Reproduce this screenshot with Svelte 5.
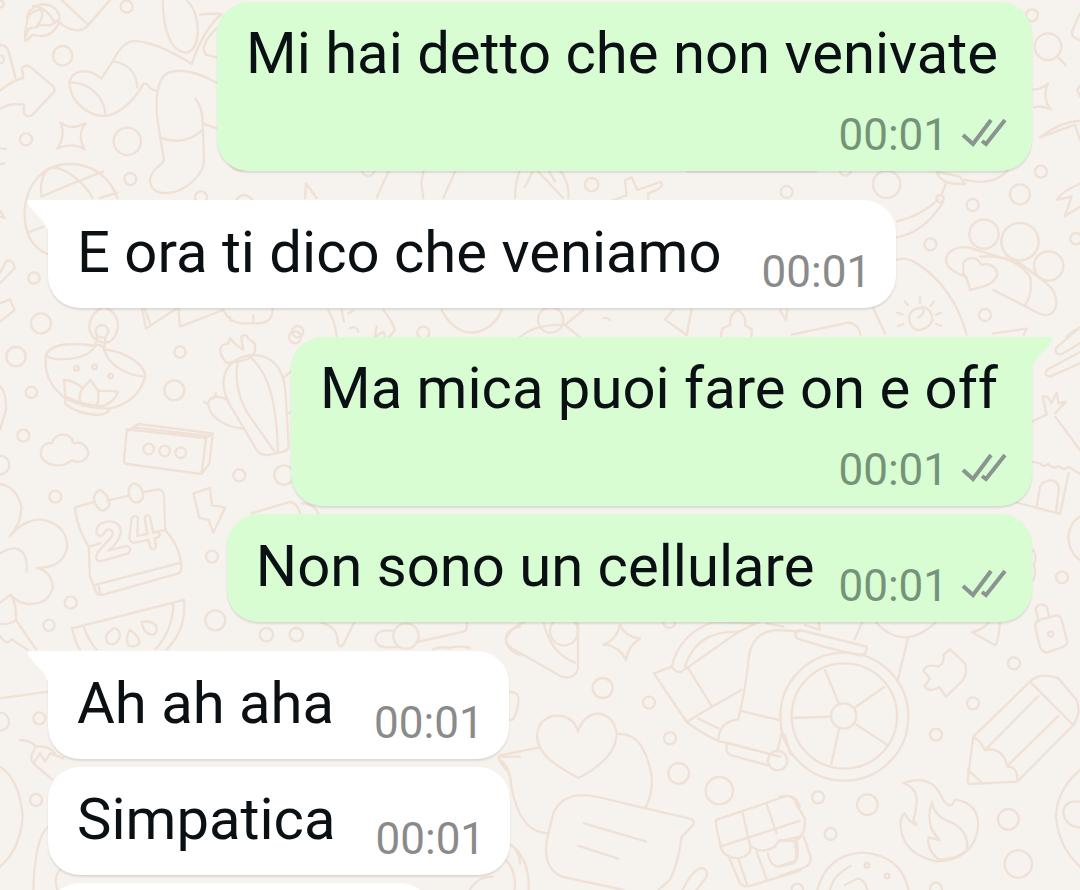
<script>
	const messages = [
		{ text: 'Mi hai detto che non venivate', time: '00:01', mine: true, stacked: true },
		{ text: 'E ora ti dico che veniamo', time: '00:01', first: true },
		{ text: 'Ma mica puoi fare on e off', time: '00:01', mine: true, first: true, stacked: true },
		{ text: 'Non sono un cellulare', time: '00:01', mine: true },
		{ text: 'Ah ah aha', time: '00:01', first: true },
		{ text: 'Simpatica', time: '00:01' },
	]

	// wallpaper drawings, on a grid three times finer than the page
	const doodles = [
		{
			x: 0,
			y: 0,
			dots: [
				[380, 20, 18], [188, 167, 29], [78, 418, 18], [382, 424, 41], [391, 537, 18],
				[102, 834, 17], [123, 970, 30], [603, 592, 18], [893, 995, 17], [0, 178, 12],
				[0, 12, 11],
			],
			paths: [
				'M185 0L265 75L330 0M170 62C210 96 245 100 265 75',
				'M82 45C100 4 160 0 178 45C182 85 145 118 105 105C82 105 90 125 76 122C70 85 84 86 82 45M82 52C125 5 145 40 108 82C75 85 85 90 78 108M108 82C132 62 145 92 168 62M100 18C125 18 150 40 165 70',
				'M0 135Q20 135 26 155L46 232M0 272Q38 240 70 234L66 204Q78 190 95 204L160 260Q168 268 160 278L98 344Q80 354 72 340L72 314Q30 308 0 326',
				'M488 0C490 90 510 150 555 158C600 160 610 50 560 0M575 192C600 120 630 70 665 42M665 42Q630 40 600 44M650 84C615 120 600 150 620 165L650 172',
				'M575 192C510 150 440 120 395 124C365 130 345 170 338 184L304 236C270 205 220 205 208 246C210 310 270 350 316 348C365 340 405 295 432 250C445 250 450 272 468 272M338 184C385 190 410 220 412 262M208 248C265 245 315 290 316 346',
				'M650 248C590 215 540 205 505 218C462 240 468 330 474 370L492 480C490 495 450 505 450 545C455 580 490 584 525 576C570 560 612 520 612 480L608 370C608 335 598 310 586 296M480 412Q550 440 606 392M608 370Q630 380 655 386',
				'M182 368Q215 392 256 370Q230 405 254 448Q215 425 172 446Q198 408 182 368Z',
				'M142 762C90 740 72 690 74 630C80 550 130 494 205 492C275 490 330 530 352 594M125 590C118 550 130 515 150 505C190 495 250 545 278 594M125 590C190 560 270 530 310 515M352 578L300 594M88 696L130 680',
				'M0 820L20 782Q40 778 44 805L0 850M0 910L30 898L44 930L0 965M0 445L18 447M0 492L12 490M0 650L14 654L0 632',
				'M312 920Q355 940 354 980Q345 1030 312 1028Q270 1020 268 980Q270 940 312 920',
				'M425 920L438 986L535 922L540 980L670 930M432 920L450 970M670 930Q690 970 730 970L780 970Q820 965 818 922M690 950v12M760 946v14M684 485Q705 520 735 510',
				'M705 605Q730 565 762 605',
			],
		},
		{
			x: 0,
			y: 300,
			dots: [
				[48, 170, 29], [94, 277, 17], [70, 407, 18], [0, 495, 28], [540, 156, 17],
				[523, 271, 30], [718, 526, 18], [852, 525, 29], [166, 590, 18],
				[636, 770, 18], [212, 908, 18], [147, 976, 17], [646, 961, 30], [799, 1004, 20],
				[889, 1004, 20], [446, 447, 16], [494, 453, 16], [542, 458, 16], [229, 205, 7],
				[284, 201, 7], [332, 228, 7], [306, 94, 19],
			],
			paths: [
				'M138 165C155 125 235 130 286 138Q300 128 312 148C380 155 435 195 436 230C420 285 380 315 328 326Q325 345 290 345Q230 340 196 312V295C150 260 130 220 138 165ZM138 165C150 185 260 185 286 138M312 148C325 190 370 225 434 230M196 295Q250 325 328 326',
				'M196 290L192 240Q220 240 248 264L272 240L294 272L354 274Q345 305 310 318Q260 320 196 290M248 264Q228 300 252 318M294 272Q300 310 284 320M290 110L286 138M316 114L312 148',
				'M125 475C115 440 140 425 156 430C165 395 215 395 220 430C250 420 272 450 262 470C250 488 230 488 216 480C195 500 150 505 125 475Z',
				'M380 395L415 372L638 400L628 490L605 522L380 492Q370 490 372 480ZM380 388L618 414L605 522M618 414L638 400M400 382L626 408',
				'M664 165C655 140 668 130 684 132L690 115L708 134L730 150L724 110Q740 98 744 115L764 130Q772 160 748 175Q700 190 680 188Q670 180 664 165',
				'M700 185C660 220 665 270 690 315L770 450Q785 470 810 464L850 455Q868 450 866 430L856 270C850 200 810 160 750 166Q720 170 700 185M715 178C700 240 720 310 750 350L826 458M745 166C800 210 830 290 834 458M728 386C670 380 620 345 626 305Q640 280 680 298M640 296L648 280M622 312L612 306M850 235L872 215M866 340L875 336',
				'M225 630Q222 618 240 618L284 606M322 602L386 588M430 576L475 568Q492 570 492 590L496 690C530 730 545 770 544 805Q545 818 530 822L310 884Q290 888 286 870L270 830L266 740C240 700 230 660 225 630M266 740L300 730M470 696L496 690M280 856L544 788M296 860L300 878',
				'M302 570Q330 590 328 615Q320 635 300 630Q280 610 282 590Q288 572 302 570M404 550Q430 560 430 590Q420 612 400 606Q384 590 386 570Q390 552 404 550',
				'M290 700Q285 670 325 664Q365 665 362 700Q355 730 325 752L380 738Q398 745 385 760L300 784Q280 780 295 755L335 710Q345 690 325 688Q315 690 310 704Q298 714 290 700M395 655L388 715Q390 728 405 728L445 720L452 745Q466 750 468 740L464 716L478 710Q484 698 470 696L460 698L450 650Q440 640 434 655L442 702L412 708L414 655Q408 640 395 655',
				'M580 580L630 564L636 616L676 622L640 698L626 660L598 654Z',
				'M0 552Q50 560 64 620Q65 670 30 708Q70 660 120 658Q200 670 202 740Q190 805 110 804Q155 815 158 860Q150 915 80 912Q50 905 32 884L0 908M0 760Q70 720 80 790V815M32 884Q50 910 48 960L108 1048M48 960Q30 975 0 972M0 1008Q20 1040 34 1018L84 1050M0 258Q20 280 18 330L0 388',
				'M216 985L552 900Q560 990 500 1048M216 985Q230 1040 240 1048M250 978Q270 1030 290 1048M520 908Q520 990 466 1048M342 984Q365 990 358 1015Q345 1040 325 1030Q312 1015 322 1000ZM390 990Q420 1010 418 1030Q405 1045 385 1036Q375 1010 390 990M425 966Q460 960 470 982Q472 1004 455 1005Q430 1000 425 966',
				'M755 640L870 606Q890 606 900 640M905 610Q940 610 955 640',
			],
		},
		{
			x: 780,
			y: 0,
			dots: [
				[756, 46, 18], [804, 140, 40], [783, 515, 18], [720, 583, 30], [578, 615, 18],
				[320, 553, 41], [480, 596, 11], [20, 576, 18], [451, 733, 18], [612, 702, 44],
				[720, 725, 56], [806, 798, 44], [888, 716, 17], [615, 945, 18], [196, 510, 17],
			],
			paths: [
				'M900 40L876 95Q872 112 900 120M832 170L858 196M760 268Q780 270 804 250Q785 290 812 328Q785 315 762 322M780 412Q840 365 900 362M780 412L885 374L900 420M900 255L892 270L900 290',
				'M900 552Q850 570 830 600L875 590L855 648L900 620M470 515Q480 555 555 552L540 530L470 515M555 540Q640 560 684 510M497 552L484 586M474 600Q420 650 350 664M490 606Q430 700 350 712M-280 514H108',
				'M500 790C490 750 540 735 575 745L720 790L800 850Q835 880 828 920Q815 955 780 942L640 870M500 790Q505 810 560 832M600 770Q700 760 750 830Q760 880 735 916M550 790Q560 770 590 776L606 795Q640 785 652 820Q650 845 610 860L570 870Q565 840 550 820Z',
				'M346 780Q380 770 410 790Q520 860 560 1004M280 925L315 1000M35 1004L205 968Q235 970 242 1004M640 1000L740 986L732 1004M860 1010Q880 990 900 985',
				'M414 952Q435 945 430 925Q400 920 388 945Q385 980 410 990Q445 990 458 960Q455 925 425 920M420 890V908M374 904L384 915M352 938L368 944M354 978L370 972M462 904L452 918M484 938L468 944M484 978L468 972',
			],
		},
		{
			x: 940,
			y: 320,
			dots: [[366, 772, 18]],
			paths: [
				'M420 22L350 82Q340 100 362 104L420 70M420 96L320 150Q310 165 330 170L420 130',
				'M275 305L320 284L308 230Q325 225 334 250L350 218L356 250L378 245L346 280M346 290L420 390M275 425L300 430Q310 445 325 432Q340 450 355 438Q375 455 385 440L420 462M386 460L360 582L220 545M290 560L300 500Q310 478 340 482Q362 490 355 520L348 575M420 590Q385 610 385 660Q390 700 420 720M280 690Q292 710 282 735Q290 760 280 780',
			],
		},
		{
			x: 500,
			y: 600,
			dots: [
				[308, 264, 30], [447, 308, 18], [510, 415, 18], [536, 520, 31], [658, 572, 41],
				[508, 66, 18], [192, 94, 42], [833, 482, 29],
			],
			paths: [
				'M80 64Q30 80 18 120Q16 130 34 144L185 230Q225 240 234 205V64M130 64Q150 160 225 188M360 75Q375 110 420 116Q385 135 378 180Q355 135 310 134Q350 120 360 75',
				'M234 395C220 330 120 330 112 400C105 450 150 490 236 534C320 490 350 445 350 400C340 325 255 320 234 395ZM350 402Q400 400 425 440Q480 540 436 624M0 466L118 442M0 480Q30 500 34 560Q60 700 145 700',
				'M430 624L290 590Q190 570 160 640L145 700Q120 800 185 830L370 870M430 624L570 656Q590 664 575 680L545 710Q535 790 510 840L475 870M252 670L438 724M236 738L354 776M548 870Q570 820 600 804Q625 805 620 830L590 870M34 735Q90 780 86 870M15 778Q50 810 44 870',
				'M462 220L515 200Q540 100 640 66L760 70M462 220L560 366Q620 410 660 424L840 470M515 200Q530 220 545 215L715 96L780 64M555 200Q590 90 715 96M565 205L636 320L560 366M636 320L724 270M595 356L655 385M715 358Q740 250 745 180Q755 95 830 90L900 94M715 358Q655 365 655 424M720 332L835 360M684 428Q670 460 700 468L805 496M690 430L810 462M845 400L833 450M855 405L870 462M800 70L850 80',
				'M648 660L860 588Q885 585 900 620M648 660Q645 670 665 750Q680 775 715 775Q760 765 750 735Q780 765 825 740L835 725L900 710M728 638L750 735M800 612L830 700M660 740L828 686L900 662M688 775L720 850Q730 862 750 858L900 812M715 775L742 856M770 755L800 838M804 760Q810 800 840 800L880 790Q895 780 885 730',
				'M30 276Q60 275 55 310Q45 365 30 360',
			],
		},
		{
			x: 780,
			y: 600,
			dots: [
				[193, 350, 192], [193, 348, 158], [191, 348, 38], [702, 190, 18], [579, 310, 18],
				[468, 404, 18], [114, 592, 18], [262, 614, 31], [152, 702, 18], [685, 658, 31],
				[715, 792, 41], [812, 102, 8], [261, 796, 7], [321, 828, 7], [468, 866, 18],
				[52, 868, 17],
			],
			paths: [
				'M135 210L177 312M226 322L312 262M228 373L320 434M178 384L154 492M38 354L153 350M60 90Q40 95 50 115Q140 145 240 166Q262 165 260 140L60 90M248 64L224 118M285 64Q370 160 470 64M385 110L352 245M75 75L120 90L115 64',
				'M576 96L645 136Q655 130 660 64M576 96Q610 90 630 64M766 82Q762 65 785 58L830 46Q840 46 845 60L862 125Q862 138 840 144L800 158Q785 155 780 140ZM775 60L766 25Q780 5 800 20L808 50',
				'M510 148L555 190Q565 220 545 245L498 290L478 262Q445 280 434 258L450 236L430 212Q440 190 475 200Q495 190 490 165Z',
				'M580 410L750 245Q780 215 835 235L890 300Q905 340 880 375L712 545L570 552Q560 550 564 530ZM750 245L880 375M775 288L615 450M835 348L685 495M580 410L600 425L615 450Q670 440 682 500Q715 500 712 545M564 510L608 550',
				'M370 550Q450 520 482 585Q510 640 525 598Q600 610 594 685Q580 780 470 784Q370 765 362 680Q360 650 374 640Q390 670 410 675L400 660Q420 590 400 570Q390 555 370 550M456 605Q460 650 520 670Q570 700 560 750Q530 780 475 778Q440 750 446 712L478 720L456 690Q440 650 456 605',
				'M0 590Q40 580 48 610L74 655Q80 710 40 724L0 720M72 712L92 770Q95 795 70 804L0 828M50 724Q60 780 40 785L0 798',
				'M112 870Q140 765 245 758Q365 765 385 870M150 870Q160 825 212 798M195 855L235 835Q255 840 262 870M900 510Q830 570 828 650Q835 740 900 800M900 605Q855 600 850 635Q855 680 900 682',
			],
		},
		{
			x: 0,
			y: 630,
			dots: [[0, 275, 27], [118, 265, 18], [108, 510, 18], [1218, 18, 38]],
			paths: [
				'M0 205L144 185M60 330Q90 330 108 350Q145 345 165 370M108 350Q85 385 100 400L158 450M100 400L120 370L135 395L150 370L190 385M0 410Q60 450 68 560Q60 660 0 710M145 590Q105 620 100 780M180 720Q160 740 172 780',
				'M965 -22Q1010 -8 1012 25Q1015 60 1030 44L1065 -28M1184 2H1155Q1125 5 1126 32Q1135 52 1160 52H1195M1252 36L1390 5Q1405 0 1400 -28M1300 58Q1320 48 1345 54Q1380 46 1410 54M1560 -10Q1515 0 1518 30Q1520 60 1560 75M1560 380H1495Q1500 400 1520 420M1525 640Q1560 660 1560 700M1410 780Q1430 740 1480 740',
			],
		},
		{
			x: 200,
			y: 150,
			dots: [],
			paths: [
				'M570 54L530 144M672 54L664 100L670 144M770 54L730 144M315 144L318 100L350 144',
			],
		},
		{
			x: 200,
			y: 150,
			dots: [[1175, 104, 20], [505, 58, 20]],
			paths: [
				'M945 144Q945 100 960 60M1000 60L975 110M1010 60L1090 144M1045 60L1065 95M1080 60Q1110 100 1105 144',
				'M1215 160L1280 136L1275 90L1295 82L1312 120L1380 96Q1395 105 1375 118L1345 130V162',
			],
		},
		{
			x: 200,
			y: 290,
			dots: [[285, 142, 18], [670, 128, 18], [1052, 90, 38]],
			paths: [
				'M385 60Q410 105 410 150M425 60L432 95M445 70L460 62M550 60Q575 90 585 120L560 150L550 125L525 140L530 110M450 115Q470 105 475 125',
				'M725 60Q760 128 820 128Q880 120 905 60M950 150Q1000 100 1095 105L1150 60M1095 105L1150 150M1210 85Q1220 80 1230 90M1395 88L1460 135L1475 60M1395 88L1420 60M1560 150L1568 115L1590 105Q1590 65 1615 62Q1640 75 1635 105L1655 118V150M1740 60L1758 90L1762 60',
			],
		},
	]
</script>

<main>
	<svg class="wallpaper" aria-hidden="true">
		{#each doodles as group}
			<g transform="translate({group.x} {group.y}) scale(0.3333)">
				{#each group.paths as d}
					<path {d} />
				{/each}
				{#each group.dots as [cx, cy, r]}
					<circle {cx} {cy} {r} />
				{/each}
			</g>
		{/each}
	</svg>

	<ol>
		{#each messages as message}
			<li class:mine={message.mine} class:first={message.first} class:stacked={message.stacked}>
				{#if message.first}
					<svg class="tail" viewBox="0 0 21 30" aria-hidden="true">
						<path d="M21 0H3Q-1 0 1 4Q5 10 11 16Q18 22 20 29H21Z" />
					</svg>
				{/if}
				<p>{message.text}</p>
				<div class="meta">
					<time>{message.time}</time>
					{#if message.mine}
						<svg class="ticks" viewBox="0 0 46 30" role="img" aria-label="delivered">
							<path d="M2 17L12 26L30 2M21 23L25 26L44 2" />
						</svg>
					{/if}
				</div>
			</li>
		{/each}
		<li class="next"></li>
	</ol>
</main>

<style>
	:global(body) {
		margin: 0;
	}
	main {
		position: relative;
		height: 100vh;
		overflow: hidden;
		background: #f6f2ed;
		font-family: Roboto, sans-serif;
	}
	.wallpaper {
		position: absolute;
		inset: 0;
		width: 100%;
		height: 100%;
		fill: none;
		stroke: #efe1d5;
		stroke-width: 7;
		stroke-linejoin: round;
		stroke-linecap: round;
	}
	ol {
		position: relative;
		display: flex;
		flex-direction: column;
		align-items: flex-start;
		gap: 8px;
		margin: 0;
		padding: 2px 48px 0;
		list-style: none;
	}
	li {
		position: relative;
		display: flex;
		align-items: flex-end;
		gap: 40px;
		box-sizing: border-box;
		min-height: 108px;
		padding: 18px 25px 10px 29px;
		border-radius: 32px;
		background: #fff;
		box-shadow: 0 2px 2px #0000001a;
	}
	li.first {
		margin-top: 21px;
		border-top-left-radius: 0;
	}
	li.mine {
		align-self: flex-end;
		gap: 24px;
		background: #d8fdd2;
	}
	li.mine.first {
		border-top-left-radius: 32px;
		border-top-right-radius: 0;
	}
	li.stacked {
		flex-direction: column;
		gap: 8px;
		padding-top: 17px;
	}
	li.next {
		width: 384px;
	}
	p {
		margin: 0 0 12px;
		color: #0a1014;
		font-size: 58px;
		line-height: 68px;
		white-space: nowrap;
	}
	.stacked p {
		margin-bottom: 14px;
		padding-right: 9px;
	}
	.meta {
		display: flex;
		align-items: center;
		gap: 13px;
		color: #8a8a8a;
		font-size: 44px;
		line-height: 52px;
	}
	.mine .meta {
		color: #76937a;
	}
	.tail {
		position: absolute;
		top: 0;
		right: 100%;
		width: 21px;
		height: 30px;
		fill: #fff;
	}
	.mine .tail {
		right: auto;
		left: 100%;
		fill: #d8fdd2;
		transform: scaleX(-1);
	}
	.ticks {
		width: 46px;
		height: 30px;
		margin-bottom: 4px;
		fill: none;
		stroke: #8a9490;
		stroke-width: 4;
	}
</style>
